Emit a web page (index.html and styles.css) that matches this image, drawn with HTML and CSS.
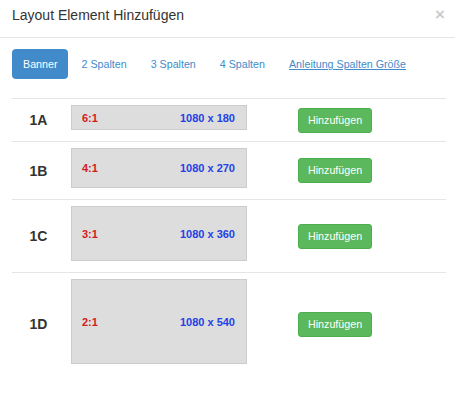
FILE: index.html
```html
<!DOCTYPE html>
<html lang="de">
<head>
    <meta charset="UTF-8">
    <meta name="viewport" content="width=device-width, initial-scale=1.0">
    <title>Layout Element Hinzufügen</title>
    <link rel="stylesheet" href="styles.css">
</head>
<body>

<div class="modal">
    <div class="modal-header">
        <h4 class="modal-title">Layout Element Hinzufügen</h4>
        <span class="close">&times;</span>
    </div>

    <div class="modal-body">
        <!-- Auswahl der Layout-Typen -->
        <ul class="nav-pills">
            <li class="active"><a href="#">Banner</a></li>
            <li><a href="#">2 Spalten</a></li>
            <li><a href="#">3 Spalten</a></li>
            <li><a href="#">4 Spalten</a></li>
            <li><a href="#" class="guide">Anleitung Spalten Größe</a></li>
        </ul>

        <div class="layout-list">
            <div class="layout-row">
                <div class="label">1A</div>
                <div class="preview-cell">
                    <div class="preview h-6">
                        <span class="ratio">6:1</span>
                        <span class="size">1080 x 180</span>
                    </div>
                </div>
                <div class="action"><button class="btn-add">Hinzufügen</button></div>
            </div>
            <div class="layout-row">
                <div class="label">1B</div>
                <div class="preview-cell">
                    <div class="preview h-4">
                        <span class="ratio">4:1</span>
                        <span class="size">1080 x 270</span>
                    </div>
                </div>
                <div class="action"><button class="btn-add">Hinzufügen</button></div>
            </div>
            <div class="layout-row">
                <div class="label">1C</div>
                <div class="preview-cell">
                    <div class="preview h-3">
                        <span class="ratio">3:1</span>
                        <span class="size">1080 x 360</span>
                    </div>
                </div>
                <div class="action"><button class="btn-add">Hinzufügen</button></div>
            </div>
            <div class="layout-row">
                <div class="label">1D</div>
                <div class="preview-cell">
                    <div class="preview h-2">
                        <span class="ratio">2:1</span>
                        <span class="size">1080 x 540</span>
                    </div>
                </div>
                <div class="action"><button class="btn-add">Hinzufügen</button></div>
            </div>
        </div>
    </div>
</div>

</body>
</html>
```

FILE: styles.css
```css
body {
    font-family: "Liberation Sans", Arial, sans-serif;
    margin: 0;
    padding: 0;
    background-color: #fff;
    color: #333;
}
.modal-header {
    display: flex;
    justify-content: space-between;
    align-items: center;
    padding: 5px 10px 12px 12px;
    border-bottom: 1px solid #e5e5e5;
}
.modal-title {
    margin: 0;
    font-size: 14px;
    font-weight: normal;
    line-height: 20px;
}
.close {
    font-size: 17px;
    font-weight: bold;
    line-height: 20px;
    color: #000;
    opacity: 0.2;
}
.modal-body {
    padding: 11px 9px 0 12px;
}
.nav-pills {
    display: flex;
    list-style: none;
    margin: 0 0 19px 0;
    padding: 0;
}
.nav-pills li + li {
    margin-left: 2px;
}
.nav-pills a {
    display: block;
    padding: 0 11px;
    line-height: 30px;
    font-size: 10.7px;
    color: #428bca;
    text-decoration: none;
    border-radius: 4px;
}
.nav-pills li.active a {
    background-color: #428bca;
    color: #fff;
}
.nav-pills a.guide {
    text-decoration: underline;
}
.layout-row {
    display: grid;
    grid-template-columns: 53px 227px 1fr;
    align-items: center;
    border-top: 1px solid #e5e5e5;
}
.layout-row > div {
    padding: 6px;
}
.label {
    text-align: center;
    font-size: 14px;
    font-weight: bold;
}
.preview-cell {
    align-self: start;
}
.preview {
    box-sizing: border-box;
    width: 176px;
    margin-bottom: 5px;
    display: flex;
    justify-content: space-between;
    align-items: center;
    padding: 0 11px 0 10px;
    background-color: #ddd;
    border: 1px solid #ccc;
    font-size: 11px;
    font-weight: bold;
}
.h-6 { height: 25px; }
.h-4 { height: 40px; }
.h-3 { height: 55px; }
.h-2 { height: 85px; }
.ratio {
    color: #d41a1a;
}
.size {
    color: #2441e6;
}
.btn-add {
    font-family: inherit;
    font-size: 10.7px;
    line-height: 23px;
    padding: 0 9px;
    color: #fff;
    background-color: #5cb85c;
    border: 1px solid #4cae4c;
    border-radius: 3px;
    cursor: pointer;
}
.btn-add:hover {
    background-color: #47a447;
}
```
